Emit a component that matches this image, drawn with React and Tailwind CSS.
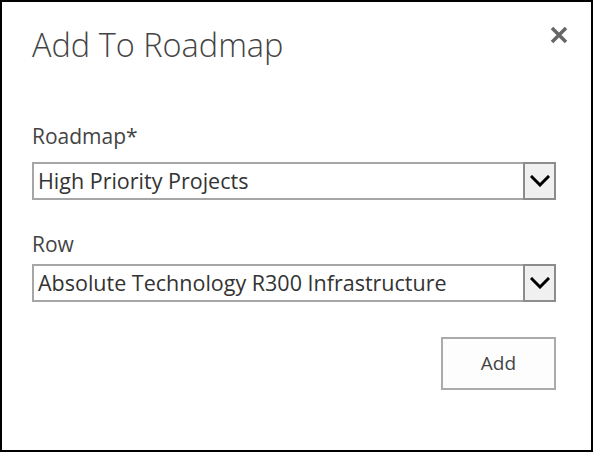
import { useState } from 'react'

function Chevron() {
    return (
        <svg width="20" height="12" viewBox="0 0 20 12" fill="none">
            <polyline points="2,2 10,10 18,2" stroke="#000" strokeWidth="3" strokeLinecap="square" />
        </svg>
    )
}

function Dropdown({ value }) {
    return (
        <div className="flex h-[38px] border-2 border-[#a6a6a6] bg-white">
            <div className="flex-1 flex items-center pl-[4px] text-[21.5px] leading-[28px] text-[#333] whitespace-nowrap overflow-hidden">
                {value}
            </div>
            <div className="w-[33px] -my-[2px] -mr-[2px] border-2 border-[#8c8c8c] bg-[#f0f0f0] flex items-center justify-center">
                <Chevron />
            </div>
        </div>
    )
}

export default function App() {
    const [roadmap] = useState('High Priority Projects')
    const [row] = useState('Absolute Technology R300 Infrastructure')

    return (
        <div className="w-[593px] h-[452px] border-2 border-black bg-white font-['Open_Sans',sans-serif] pl-[30px] pr-[35px]">
            <div className="flex items-start justify-between pt-[23px]">
                <h1 className="text-[32.5px] leading-[40px] font-light text-[#444]">Add To Roadmap</h1>
                <button className="-mr-[13px] text-[#666]" title="Close">
                    <svg width="20" height="20" viewBox="0 0 20 20">
                        <path d="M3 3 L17 17 M17 3 L3 17" stroke="#666" strokeWidth="3.5" />
                    </svg>
                </button>
            </div>

            <div className="mt-[57px] text-[21px] leading-[28px] text-[#444]">Roadmap*</div>
            <div className="mt-[12px]">
                <Dropdown value={roadmap} />
            </div>

            <div className="mt-[30px] text-[21px] leading-[28px] text-[#444]">Row</div>
            <div className="mt-[6px]">
                <Dropdown value={row} />
            </div>

            <div className="flex justify-end mt-[35px]">
                <button className="w-[115px] h-[53px] border-2 border-[#ababab] bg-[#fdfdfd] text-[19px] text-[#444]">
                    Add
                </button>
            </div>
        </div>
    )
}
